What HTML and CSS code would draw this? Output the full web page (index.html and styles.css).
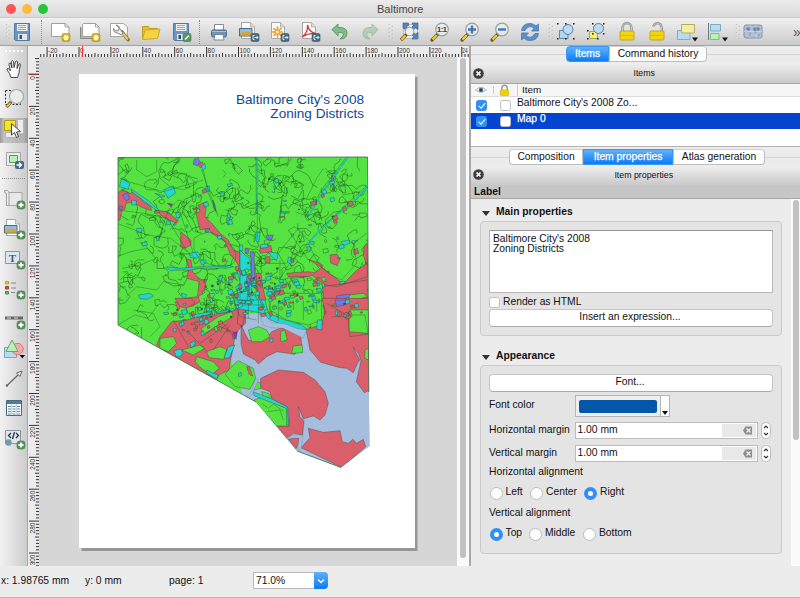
FILE: index.html
```html
<!DOCTYPE html>
<html lang="en">
<head>
<meta charset="utf-8">
<title>Baltimore</title>
<link rel="stylesheet" href="styles.css">
</head>
<body>
<svg class="defs" width="0" height="0" aria-hidden="true">
  <defs>
    <g id="grip" fill="#fafafa"><g fill="#b5b5b5"><circle cx="1.5" cy="1.5" r=".8"/><circle cx="4.5" cy="3.5" r=".8"/><circle cx="1.5" cy="5.5" r=".8"/><circle cx="4.5" cy="7.5" r=".8"/><circle cx="1.5" cy="9.5" r=".8"/><circle cx="4.5" cy="11.5" r=".8"/><circle cx="1.5" cy="13.5" r=".8"/><circle cx="4.5" cy="15.5" r=".8"/></g><circle cx="2" cy="2" r=".6"/><circle cx="5" cy="4" r=".6"/><circle cx="2" cy="6" r=".6"/><circle cx="5" cy="8" r=".6"/><circle cx="2" cy="10" r=".6"/><circle cx="5" cy="12" r=".6"/><circle cx="2" cy="14" r=".6"/><circle cx="5" cy="16" r=".6"/></g>
    <g id="floppy"><path d="M4.500 3.500h15v17h-14l-1-1z" fill="#6d95c2" stroke="#5578a0"/><path d="M7 4h10.500v7h-10.500z" fill="#eef0f0"/><path d="M8 5.500h8M8 7.500h8M8 9.500h8" stroke="#a2a7a9"/><path d="M8 14h9v6h-9z" fill="#e2e6e8"/><path d="M9.500 15h2.500v4h-2.500z" fill="#34506e"/></g>
    <g id="star"><rect x="14" y="13.500" width="8" height="8" rx="1.500" fill="#d2ad24" stroke="#b3911a" stroke-width=".6"/><path d="M18 14.500v6M15 17.500h6M16 15.500l4 4M20 15.500l-4 4" stroke="#fff6c6" stroke-width="1.200"/></g>
    <g id="lens"><path d="M9.500 14.500L4 20" stroke="#6a5a20" stroke-width="3.200" stroke-linecap="round"/><path d="M9 15L4.500 19.500" stroke="#f4cf30" stroke-width="2.200"/><path d="M10.500 13.500L9 15" stroke="#333" stroke-width="3"/><circle cx="14" cy="9.500" r="6.300" fill="#e9eded" fill-opacity=".8" stroke="#9a9f9f" stroke-width="1.200"/></g>
    <g id="export"><rect x="14" y="13.500" width="8" height="8" rx="1.500" fill="#4a6d87" stroke="#34536b" stroke-width=".6"/><path d="M17.500 15.500h-1.500v4h1.500M17.500 17.500h3.500M19.500 16l1.500 1.500-1.500 1.500" fill="none" stroke="#eef4f8" stroke-width=".9"/></g>
    <g id="paper"><path d="M4.500 2.500h9l4 4.500v11.500h-13z" fill="#fbfbfb" stroke="#a6a8a6"/><path d="M13.500 2.500v4.500h4" fill="#ddd" stroke="#a6a8a6" stroke-width=".8"/></g>
    <g id="picture"><path d="M2.500 8.500h12.500v7.500h-12.500z" fill="#8fc0df" stroke="#4b6b80"/><path d="M3 13.500q5-3.500 11.500-.5v2.500h-11.500z" fill="#d8a432"/></g>
    <g id="plus"><rect x="15" y="14" width="8" height="8" rx="2.500" fill="#58935c" stroke="#3f7a45" stroke-width=".6"/><path d="M19 15.500v5M16.500 18h5" stroke="#fff" stroke-width="1.800"/></g>
    <g id="corners" fill="#111"><path d="M3 3h1.500v1.500H3zM19 3h1.500v1.500H19zM3 18h1.500v1.500H3zM19 18h1.500v1.500H19zM11 3h1.500v1.500H11zM11 18h1.500v1.500H11z"/></g>
    <g id="lockbody"><rect x="5" y="11" width="14" height="9" rx="1" fill="#f2d60c" stroke="#b39c10" stroke-width=".8"/><path d="M5.500 15.500h13" stroke="#dfc000"/></g>
    <g id="close"><circle cx="5.500" cy="5.500" r="5.300" fill="#3d3d3d"/><path d="M3.500 3.500l4 4M7.500 3.500l-4 4" stroke="#fff" stroke-width="1.700"/></g>
    <g id="clear"><path d="M0 4.500L2.500 .5h6.500v8h-6.500z" fill="#8d8d8d"/><path d="M3.500 2.500l4 4M7.500 2.500l-4 4" stroke="#f5f5f5" stroke-width="1.200"/></g>
  </defs>
</svg>

<div class="window">
  <header class="titlebar"><div class="lights"><i class="red"></i><i class="amber"></i><i class="green"></i></div><h1>Baltimore</h1></header>

  <nav class="toolbar">
    <svg class="grip lead" width="7" height="18"><use href="#grip"/></svg>
    <span class="tool"><svg viewBox="0 0 24 24"><use href="#floppy"/></svg></span>
    <span class="sep"></span>
    <span class="tool"><svg viewBox="0 0 24 24"><path d="M3.500 3.500h13.500l4 3.500v9.500h-17.500z" fill="#fff" stroke="#9d9f9e"/><path d="M17 3.500v3.500h4" fill="none" stroke="#9d9f9e"/><use href="#star"/></svg></span>
    <span class="tool"><svg viewBox="0 0 24 24"><path d="M2.500 7v11.500h14" fill="#bbb" stroke="#888"/><path d="M5.500 3.500h12l3.500 3.500v9.500h-16.500v-12z" fill="#fff" stroke="#9d9f9e"/><path d="M17.500 3.500v3.500h3.500" fill="none" stroke="#9d9f9e"/><use href="#star"/></svg></span>
    <span class="tool"><svg viewBox="0 0 24 24"><path d="M2.500 3.500h13l4 3.500v9.500h-17z" fill="#fff" stroke="#a5a7a6"/><path d="M14 12L20 19.500" stroke="#7e6a22" stroke-width="3.600" stroke-linecap="round"/><path d="M14.500 13L20 19.500" stroke="#e9cf62" stroke-width="2"/><path d="M8 5l3 2.500-.5 3-3 .5-2-2.500q0 4.500 4 4.500l4 2 1.500-2-3-4q-.5-3.500-4-4z" fill="#eee" stroke="#777" stroke-width=".9"/></svg></span>
    <span class="tool"><svg viewBox="0 0 24 24"><path d="M3.500 19V6.500h6l1 2h8v2.500" fill="#e5bd31" stroke="#c29b20"/><path d="M3.500 19.500L6 10l15-1-2.500 9.500z" fill="#f4d33f" stroke="#d0a827"/></svg></span>
    <span class="tool"><svg viewBox="0 0 24 24"><use href="#floppy"/><rect x="14" y="13.500" width="8" height="8" rx="1.500" fill="#58935c" stroke="#3f7a45" stroke-width=".6"/><path d="M16 19.500l4-4" stroke="#e6f2e6" stroke-width="1.700"/></svg></span>
    <span class="sep"></span>
    <span class="tool"><svg viewBox="0 0 24 24"><path d="M7.500 4.500h9v6h-9z" fill="#fff" stroke="#889"/><rect x="4.500" y="10" width="15" height="7" rx="1.500" fill="#6f93b0" stroke="#4d6d8a"/><path d="M5 11.500h14" stroke="#a8c3d8"/><path d="M8 14.500h8l1 5.500h-10z" fill="#fbfbfb" stroke="#78899a"/></svg></span>
    <span class="tool"><svg viewBox="0 0 24 24"><use href="#paper"/><use href="#picture"/><use href="#export"/></svg></span>
    <span class="tool"><svg viewBox="0 0 24 24"><use href="#paper"/><path d="M10.500 6.500v11M5 12h11M6.500 8l8 8M14.500 8l-8 8" stroke="#eb9b24" stroke-width="1.700"/><circle cx="10.500" cy="12" r="2" fill="#fff1ca" stroke="#eb9b24"/><use href="#export"/></svg></span>
    <span class="tool"><svg viewBox="0 0 24 24"><use href="#paper"/><path d="M4 17q6-4 5.500-12q1.500 7 8 8.500q-7-.5-13.500 3.500" fill="none" stroke="#cf3e3e" stroke-width="1.300"/><use href="#export"/></svg></span>
    <span class="tool"><svg viewBox="0 0 24 24"><path d="M4 9.500L10 4v3.500q9-.5 9 5.500t-7 6q4-3 3.500-5t-5.500-1.500v3.500z" fill="#82bb87" stroke="#5a9e63" stroke-linejoin="round"/></svg></span>
    <span class="tool faded"><svg viewBox="0 0 24 24"><path d="M20 9.500L14 4v3.500q-9-.5-9 5.500t7 6q-4-3-3.500-5t5.500-1.500v3.500z" fill="#82bb87" stroke="#5a9e63" stroke-linejoin="round"/></svg></span>
    <svg class="grip g1" width="7" height="18"><use href="#grip"/></svg>
    <span class="tool"><svg viewBox="0 0 24 24"><path d="M6.500 4.500h14v14h-14z" fill="#e8eaea" stroke="#b9bdbd"/><path d="M6 3h5.500v2.500l-2 1 1.500 2-2 1.500-3-2zM21 3h-6l1.500 2.500-2 2 2 2 2-1.500 2.500 1.500zM21 19h-6l1.500-2.500-2-2 2-2 2 1.500 2.500-1.500z" fill="#5585b9" stroke="#3a6797" stroke-width=".7"/><circle cx="12.500" cy="11.500" r="4.200" fill="#eef0f0" stroke="#a6a6a6"/><path d="M9.500 14.500L4 20" stroke="#5c4c18" stroke-width="3.200"/><path d="M8.500 15.500L4.500 19.700" stroke="#f4cf30" stroke-width="2.200"/></svg></span>
    <span class="tool"><svg viewBox="0 0 24 24"><use href="#lens"/><text x="14" y="12.300" text-anchor="middle" font-size="7.500" font-weight="bold" fill="#333" textLength="10">1:1</text></svg></span>
    <span class="tool"><svg viewBox="0 0 24 24"><use href="#lens"/><path d="M14 5.500v8M10 9.500h8" stroke="#4379b3" stroke-width="2.400"/></svg></span>
    <span class="tool"><svg viewBox="0 0 24 24"><use href="#lens"/><path d="M10 9.500h8" stroke="#4379b3" stroke-width="2.400"/></svg></span>
    <span class="tool"><svg viewBox="0 0 24 24"><path d="M3.500 10.500q1-7 8.500-7 4 0 6 2.500l2.500-2v7h-7l2.500-2.500q-4-4-8 .5l-1 1.500zM20.500 13.500q-1 7-8.500 7-4 0-6-2.500l-2.500 2v-7h7l-2.500 2.500q4 4 8-.5l1-1.500z" fill="#5d90cb" stroke="#4577b2" stroke-width=".8"/></svg></span>
    <svg class="grip g2" width="7" height="18"><use href="#grip"/></svg>
    <span class="tool"><svg viewBox="0 0 24 24"><path d="M5.500 10.500h8.500v8h-8.500z" fill="#b4d5ec" stroke="#6089a7"/><circle cx="14" cy="9.500" r="5" fill="#b9dcf4" stroke="#53809f"/><use href="#corners"/></svg></span>
    <span class="tool"><svg viewBox="0 0 24 24"><path d="M5.500 11.500h8v7h-8z" fill="#f2ee7d" stroke="#afa852"/><circle cx="14.500" cy="8.500" r="5" fill="#b9dcf4" stroke="#53809f"/><path d="M8 3h1.500v1.500H8zM19 3h1.500v1.500H19zM3 10h1.500v1.500H3zM8 13h1.500v1.500H8zM19 13h1.500v1.500H19zM3 18h1.500v1.500H3zM13 18h1.500v1.500H13z" fill="#111"/></svg></span>
    <span class="tool"><svg viewBox="0 0 24 24"><path d="M7.500 12V8a4.500 5 0 0 1 9 0v4" fill="none" stroke="#8a8a8a" stroke-width="2.300"/><path d="M7.500 12V8a4.500 5 0 0 1 9 0v4" fill="none" stroke="#ddd" stroke-width=".8"/><use href="#lockbody"/></svg></span>
    <span class="tool"><svg viewBox="0 0 24 24"><path d="M8 6.500q3-5 7-2.500 2 1.500 2 8" fill="none" stroke="#8a8a8a" stroke-width="2.300"/><path d="M8 6.500q3-5 7-2.500 2 1.500 2 8" fill="none" stroke="#ddd" stroke-width=".8"/><use href="#lockbody"/></svg></span>
    <span class="tool"><svg viewBox="0 0 24 24"><path d="M2.500 10.500h12.500v9h-12.500z" fill="#b9dcf4" stroke="#84aac4"/><path d="M6.500 4.500h13v8.500h-13z" fill="#f3efa0" stroke="#b3ae62"/><path d="M17 17.500h6l-3 4z" fill="#111"/></svg></span>
    <span class="tool"><svg viewBox="0 0 24 24"><path d="M3.500 3v17" stroke="#777"/><path d="M5.500 4.500h10v6.500h-10z" fill="#b9dcf4" stroke="#7da8c6"/><path d="M5.500 13.500h8.500v6h-8.500z" fill="#b9f1bd" stroke="#80bd85"/><path d="M17 17.500h6l-3 4z" fill="#111"/></svg></span>
    <svg class="grip g2" width="7" height="18"><use href="#grip"/></svg>
    <span class="tool"><svg viewBox="0 0 24 24"><rect x="3" y="5" width="18" height="13" rx="2" fill="#b4c1d2" stroke="#7f94ad"/><path d="M5 8l4-1 1 2-2 2-2-1zM8 12l2 1-1 4zM12 8l3-1 4 1-1 3-2-1-1 4-2-3zM17 14l2 1-1 1z" fill="#6883a2" stroke="#8ba0b8" stroke-width=".5"/><path d="M3 11.500h18M9 5v13M15 5v13" stroke="#dce3ed" stroke-width=".5"/></svg></span>
    <span class="more">»</span>
  </nav>

  <div class="workspace">
    <nav class="sidebar">
      <span class="grip-h"></span>
      <span class="tool"><svg viewBox="0 0 24 24"><path d="M9 20.500q-1-4-3.500-7-1.500-2 .5-2 1.500.5 2.500 2.500L7 7.500q0-2 1.500-1.500L10 11 9.500 4.500q.5-2 2 0l.6 6L13.500 4.500q1.500-1.500 2 .5l-.5 6.500L17 7q1.500-1 1.500.5-1.500 6-1.500 8.500l-1.500 4.500z" fill="#fff" stroke="#333" stroke-width=".9" stroke-linejoin="round"/></svg></span>
      <span class="tool"><svg viewBox="0 0 24 24"><path d="M3.500 3.500h15v14h-15z" fill="none" stroke="#333" stroke-dasharray="2 1.500"/><path d="M9 15L4.500 20" stroke="#5c4c18" stroke-width="3.200"/><path d="M8.500 16L4.500 19.700" stroke="#e5bc3d" stroke-width="2"/><circle cx="14.500" cy="9.500" r="7" fill="#e8ecec" stroke="#a3a7a7" stroke-width="1.200"/></svg></span>
      <span class="tool active"><svg viewBox="0 0 24 24"><path d="M15.500 2.500h6v14h-6zM3.500 15.500h11v5h-11z" fill="#ececec" stroke="#b5b5b5"/><path d="M2.500 3.500h11v10h-11z" fill="#f7e32a" stroke="#b59b12"/><path d="M9.500 6.500v11.500l3-2.500 2 5 2-1-2-4.500 4-.5z" fill="#fff" stroke="#444"/></svg></span>
      <span class="tool low"><svg viewBox="0 0 24 24"><path d="M4.500 3.500h14v13h-14z" fill="#ececec" stroke="#a3a3a3"/><path d="M7.500 6.500h8v7h-8z" fill="#b4f2b7" stroke="#5c9b60"/><rect x="13" y="12" width="9" height="8" rx="2" fill="#426887"/><path d="M14.500 16h5M17 13.500l2.500 2.500-2.500 2.500" fill="none" stroke="#fff" stroke-width="1.400"/></svg></span>
      <span class="sep-h"></span>
      <span class="tool"><svg viewBox="0 0 24 24"><path d="M6.500 5.500h13.500v13h-13.500z" fill="#e8e8e8" stroke="#a8a8a8"/><path d="M2.500 3.500h3q1.500 1 1.500 3v12h-2.500v-12q-2 .5-2-3z" fill="#eee" stroke="#a0a0a0"/><use href="#plus"/></svg></span>
      <span class="tool"><svg viewBox="0 0 24 24"><use href="#paper"/><use href="#picture"/><use href="#plus"/></svg></span>
      <span class="tool"><svg viewBox="0 0 24 24"><path d="M3.500 4.500h14v12h-14z" fill="#d9e7f0" stroke="#8199aa"/><text class="serif-t" x="10.500" y="14.500" text-anchor="middle">T</text><use href="#plus"/></svg></span>
      <span class="tool"><svg viewBox="0 0 24 24"><path d="M9 6h5M9 11h5M9 15.500h4" stroke="#888"/><path d="M3.500 4.500h3v2.500h-3z" fill="#f6e520" stroke="#a79b24"/><path d="M3.500 9.500h3v2.500h-3z" fill="#d65252" stroke="#994040"/><path d="M3.500 14.500h3v2.500h-3z" fill="#70b879" stroke="#4e8555"/><use href="#plus"/></svg></span>
      <span class="tool"><svg viewBox="0 0 24 24"><path d="M3 9.500h18v3h-18z" fill="#666"/><path d="M5 11h4M12 11h4" stroke="#ddd"/><use href="#plus"/></svg></span>
      <span class="tool"><svg viewBox="0 0 24 24"><path d="M2.500 10.500h12v10h-12z" fill="#b9dcf4" stroke="#78a5c4"/><circle cx="15.500" cy="12" r="5.700" fill="#f5aaaa" stroke="#d87575"/><path d="M10 3L16 14.500H4z" fill="#bbefb7" stroke="#67a566"/><path d="M17.500 18h5.500l-2.700 3.500z" fill="#111"/></svg></span>
      <span class="tool"><svg viewBox="0 0 24 24"><path d="M4.500 19L16 8" stroke="#666" stroke-width="1.200"/><path d="M20 4l-5.500 2 3.500 3.500z" fill="#eee" stroke="#666"/><circle cx="5" cy="18.500" r="1.200" fill="#666"/></svg></span>
      <span class="tool"><svg viewBox="0 0 24 24"><path d="M4.500 3.500h15v15h-15z" fill="#f8fafb" stroke="#456b86"/><path d="M5 4h14v3h-14z" fill="#527b99"/><path d="M6 9.500h3M6 12h3M6 14.500h3M6 17h3M10.500 9.500h3M10.500 12h3M10.500 14.500h3M10.500 17h3M15 9.500h3M15 12h3M15 14.500h3M15 17h3" stroke="#668aa4" stroke-width="1.200"/><path d="M9.700 7v11M14.300 7v11" stroke="#9bb1c0" stroke-width=".6"/></svg></span>
      <span class="tool"><svg viewBox="0 0 24 24"><path d="M3.500 3.500h15v13h-15z" fill="#dce8f0" stroke="#8799a5"/><path d="M9 6l-2.500 2.500L9 11M14 6l2.500 2.500L14 11M12.500 5l-2 7" fill="none" stroke="#333" stroke-width="1.300"/><circle cx="6.500" cy="15.500" r="3.200" fill="#7497ca"/><path d="M4 14l3-1 1 2-3 2z" fill="#69ad5a"/><use href="#plus"/></svg></span>
    </nav>

    <main class="view">
      <svg class="ruler-x" id="rulerX" width="441" height="11"></svg>
      <div class="view-body">
        <svg class="ruler-y" id="rulerY" width="11" height="509"></svg>
        <div class="canvas">
          <article class="page">
            <h2>Baltimore City's 2008<br>Zoning Districts</h2>
            <svg class="map" width="256" height="314" viewBox="117 156 256 314">
              <clipPath id="city"><path d="M118 157.500L367.500 157L368.800 392 369.500 446 341 467.500 297 451 256 402 118 325z"/></clipPath>
              <g clip-path="url(#city)">
                <path d="M117 156h254v312h-254z" fill="#55e342"/>
                <g id="parcels" class="lines"></g>
                <g class="shape" transform="translate(110 150) scale(.33333)">
                  <path class="r" d="M22 130l13-10 25 10 12-5 20 20 8 10 22 15 3 12-30-10-25-15-22 3-3 18-10 5-5 27-10 4zM135 180l35 5 35 27-5 8-35-15zM258 190l12-5-5-20 25-10-5 45 25 25 20 25 25 20 15 30 30 10 2 50-17-15-25-35-15-35-40-25-10-15-25 5zM212 245l31 25v15l-18 10-13-5zM232 328l11 2 5 35 22 25 20-2-10 42-15 10 5 15-25 15-30-10 10-15 37-5 6-45-38-10 5-25zM195 455l20 5-10 22z"/>
                  <path class="c" d="M35 85l25 15-5 18-27-8zM62 116l53 36 32 28-6 2-45-34-30-22zM160 120l30-12 6 22-22 15zM135 130l30 8-10 4zM65 150l15 3-2 12-13 0zM198 188h12v15h-12zM170 212h12v12h-12zM80 235h16v12h-16zM140 260h8v12h-8zM238 310l25-5 8 12-10 8-20-2zM270 330h18v10l-14 4zM85 435l35-5 10 8-18 10-22-2zM350 212l15-3 3 13-14 3zM388 285h10v18h-10zM288 108h10v16h-10zM325 380l12-4 2 12-10 4zM170 350l35 5 70-5 80-4 15 4-15 4-90 1-25 5-40 0-18 2-8-6zM380 360l20 10 30 60-10 52h-45l10-50-8-20 14-15zM215 430l15 4-5 10-10-4z"/>
                  <path class="p" d="M252 28l12-5 8 15-10 10-12-5zM38 135l15-8 5 20-10 6zM28 168l10 2-3 10-7-3zM285 238l15-3-5 11-9 1zM362 370l12 8 8 14-12-10zM308 150l6 12 3 20-6-8z"/>
                  <path fill="#c11bd8" d="M172 160l15 2-3 9z"/>
                  <path class="r" d="M265 42l12-6 5 12-12 5z"/><path class="c" d="M275 48l10-8 2 15-10 5z"/>
                  <path class="n" d="M280 60l15 70 25 60M275 60l50 140M30 85q20 10 130 40l50-15 70-20M22 220l90 35 70 10 75 60M22 180l80 10 70 15 60 100M252 265q40-30 70-10l50 40q20 50-30 55-70 0-90-50zM145 270l30-90 30-30 30 10M180 240l40-55 30 60M210 185l40 125M22 320l40-15 50-10 25 30-45 20-55 10M80 30v30l30 20 30-15v-35M150 85l40-20 40 10 30 25-40 20-40-10zM338 60l10 10-8 12M30 390l20-20 25 35M50 440l30-30 60 10 20-25 60 10"/>
                </g>
                <g class="shape" transform="translate(240 150) scale(.33333)">
                  <path class="r" d="M205 328l45 28 60 45 40-40 32-22v112l-20 30h-110l-5-80-30-25-12 4-60 0-5-10 65-5 20 3 25-20-10-8zM270 315l20-3 10 15-8 20-20-8zM60 290l15-8 18 5 3 25-18-5-18 3zM48 370l15 0 5 40 10 40-15 10-12-30zM0 305l10 20-2 35-8-5zM340 300l12-5 5 15-14 4zM372 290l10-8v65l-12-30zM75 320h15v20l-15-4zM280 212l10-2 2 8-10 2zM150 325h12v12h-12z"/>
                  <path class="cl" d="M51 22l2 60-2 60 1 48M324 22l-70 95-50 83M382 110l-40 44-48 38-52 46-40 44"/>
                  <path class="n" d="M202 282l-55 60-27 45M48 22l1 170M318 22l-70 94-48 78M378 108l-84 80-52 46"/>
                  <path class="c" d="M102 90l10-5 5 8-9 7zM48 245l12 3-3 28-10-4zM302 275l25-5 3 10-20 7zM335 273l18-2-12 12zM245 125l10-8 6 10-9 8zM85 305l30 5-5 22-15-12zM0 300l15 15 15 10 5 50 0 50 35 45v10H0zM105 410l12-5 4 70-14-10zM145 322l8 0 1 20-12-5zM200 290l14 2-2 10-11-2zM300 395l14-2 0 8-16 1zM120 185h18v4h-18zM60 285l20-5 5 12-22 3zM120 400l12-3v15h-12zM170 405l15 2-5 8-12-1zM230 398l8 0v10h-8z"/>
                  <path class="p" d="M78 257l22-2-5 14-12 2zM30 305l12 0 4 110-14-10 2-70zM15 295h10v15h-10zM22 375l10 5-5 35-12-2zM290 438l35-6 10 5-22 30-25 3zM275 75l8 15-8 10zM222 160l8-10 0 15z"/>
                  <path class="g" d="M330 435l40-5 12 10-35 10-20 30h-15zM245 382l10 0 4 12-12-2z"/>
                  <path class="n" d="M52 150L52 270M150 335l30-90-5-10-60 75 25 45M205 330l-60-90 20-10 60 60M205 200l-40-15M175 150l25-5 30-60 20-30M210 290q30 80 95 100l45-50-10-60 40-30M50 340h90M120 330v60l80-10M230 400l60 10 92-30M250 410l132-20M135 110l-10 50-10 60M125 140l-5 80M155 22l-15 30M255 55l35 30 20 50 50-10"/>
                </g>
                <g class="shape" transform="translate(110 300) scale(.33333)">
                  <path class="w" d="M380 100L395 40h60l135 45 190 20V520H560L400 290 360 175z"/>
                  <path class="r" d="M140 135l10-25 35-45 45-5 60-15 80-10 25-25 12 25v35l-22 20-10 15-5 35-10 50-3 20-30 15-8 15 45 50 52 5-6 20zM393 75l22 45 25 5 30-10 15-20 25-10 35 0 27 20 3 30-20 28-55-8-30 15-25 22-10-12-35-18-7-32zM588 88l12 62 32 37 58 16 20 2 20 13 10-23 9-15-19-38 15 18 8 22-14 63 24 33 16-8V-5H635l10 35-10 45zM452 235l53-25 75 7 35 23 30 35 10 35-10 35-15 15-20-12-30 8-15-36 5 30 12 12-4 43-28-5-20 15-30-37 38 0-3-53-50-30-5-20-28-10zM595 385l45 12 50-5 7 33 18 5 13-12 12 12 20-12 7 22-72 62-122-59 27-30zM535 418l33-6-3 18-7 17zM195-5h50l10 15-25 15-20-5zM395 0l12 35-10 45-15-10 5-60z"/>
                  <path class="g" d="M375 190l10-8 45 23 7 30-17 33-45-8-30-38zM432 300l23-8 75 33 8 53-38 0-65-75zM435 245l15 3 3 17-20 5zM550 138l27-3 1 23-33 2zM455 275l20 5 10 12-25 0zM415 90l30-10 25 10 10 20-25 15-30 0zM512 95l12-5 8 30-20 5zM260 170l50 15 18 20-25 20-35-25-12-15zM275 85l50-35 40-15 5 15-55 30-35 25zM290 155l40-15 20 8-8 30-45-5zM150 115l40-5 10 20-25 25-25-10zM718 30h58v70l-60-5zM765 150l11-5v35l-12-5zM215 150l55-15 15 10-35 20zM480-20h155v80l-40 15-65-15-50-30z"/>
                  <path class="c" d="M375 0h90l10 40 50 20 50 15 15 12-20 2-55-15-35-15-25-20-80-15zM192 152l20-5 8 12-12 12-10-2zM355 140l20-5-18 40-15-2zM622 60h14v28h-16zM290 210l20 10 15 5-5 12-30-18zM430 275l50 20 52 25 3 55-5 0-1-50-97-38zM310 40l60-15 5 6-65 12zM250 45l50-10 0 8-48 10zM190 85l8 0v10h-8zM385 220l8-3 2 9-9 4zM480 115l10 2-3 10-8-2zM240 130l15-8v12l-12 10zM610 0h20v8h-20z"/>
                  <path class="p" d="M675 0h35l-5 15-25 5zM368 100h8v15h-8z"/><path fill="#b91dce" d="M370 98l12-3-4 22z"/>
                  <path class="w water" d="M448 42l20 6 15 20 40 3 40 15 27 4-10 25-60-30-38-2-22-8z"/>
                  <path class="r" d="M410 200l8 0 10 28-10-4z"/>
                  <path class="w water" d="M437 235l8 5-20 45-8 8-7-4 15-15zM530 415q15-12 42-10l6 4-5 42-9-2 3-35z"/>
                  <path class="n" d="M190 60l45 80M230 90l60 65M285 100l45-20 50 20M310 150l50-75M330 60l50 60M270 130l85-60M650 10l60 35 55 0 10 60M665 50h50l5 60 56-8M480 10v45M505 5v60M550 0v30M580 0v60M620 0v35M375 10l15 40 50 10M400 15h60M415 0v55M445 0v70M24 75l50-30 40 10 30-40M70 30l60 10 20 40-30 30M455 310l20 15 15-12 30 20M470 335l40-5 10 30"/>
                </g>
                <g id="specks"></g>
              </g>
              <path d="M118 157.500L367.500 157L368.800 392M341 467.500L297 451M256 402L118 325V157.500" fill="none" stroke="#336b48" stroke-width=".8"/>
            </svg>
          </article>
        </div>
        <div class="vscroll"><i></i></div>
      </div>
    </main>

    <aside class="dock">
      <div class="tabs first"><span class="tab on t1">Items</span><span class="tab t2">Command history</span></div>
      <div class="dock-title items"><svg width="11" height="11"><use href="#close"/></svg><b>Items</b></div>
      <section class="tree">
        <div class="tree-head">
          <span class="cell eye"><svg width="12" height="8" viewBox="0 0 12 8"><path d="M.5 4Q5.500-1.500 11.500 4 6 8.500.5 4z" fill="#e7ecef" stroke="#a4adb3" stroke-width=".8"/><circle cx="6" cy="4" r="2.300" fill="#4c7898"/><circle cx="6" cy="4" r="1" fill="#142b3a"/></svg></span>
          <span class="cell lock"><svg width="11" height="12" viewBox="4 1 16 20"><path d="M7.500 12V8a4.500 5 0 0 1 9 0v4" fill="none" stroke="#999" stroke-width="2.300"/><use href="#lockbody"/></svg></span>
          <span class="cell">Item</span>
        </div>
        <div class="tree-row"><i class="check on"></i><i class="check"></i><span>Baltimore City's 2008 Zo...</span></div>
        <div class="tree-row selected"><i class="check on"></i><i class="check"></i><span>Map 0</span></div>
      </section>
      <div class="tabs second"><span class="tab t3">Composition</span><span class="tab on t4">Item properties</span><span class="tab t5">Atlas generation</span></div>
      <div class="dock-title props"><svg width="11" height="11"><use href="#close"/></svg><b>Item properties</b></div>
      <div class="kind">Label</div>
      <div class="scroll-area">
        <div class="form">
          <h3><i></i>Main properties</h3>
          <section class="group main-group">
            <div class="textarea">Baltimore City's 2008<br>Zoning Districts</div>
            <label class="html"><i class="check"></i>Render as HTML</label>
            <div class="button">Insert an expression...</div>
          </section>
          <h3 class="h-app"><i></i>Appearance</h3>
          <section class="group app-group">
            <div class="button">Font...</div>
            <div class="row color-row"><span>Font color</span><div class="swatch"><i></i><em></em></div></div>
            <div class="row"><span>Horizontal margin</span><div class="field"><b>1.00 mm</b><em><svg width="9" height="9"><use href="#clear"/></svg></em></div><svg class="spin" width="10" height="17"><rect x=".5" y=".5" width="9" height="16" rx="4" fill="#fff" stroke="#bbb"/><path d="M3 6l2-2 2 2M3 11l2 2 2-2" fill="none" stroke="#333" stroke-width="1.200"/></svg></div>
            <div class="row"><span>Vertical margin</span><div class="field"><b>1.00 mm</b><em><svg width="9" height="9"><use href="#clear"/></svg></em></div><svg class="spin" width="10" height="17"><rect x=".5" y=".5" width="9" height="16" rx="4" fill="#fff" stroke="#bbb"/><path d="M3 6l2-2 2 2M3 11l2 2 2-2" fill="none" stroke="#333" stroke-width="1.200"/></svg></div>
            <div class="align-label">Horizontal alignment</div>
            <div class="radios"><i></i><span class="w1">Left</span><i></i><span class="w2">Center</span><i class="on"></i><span>Right</span></div>
            <div class="align-label v">Vertical alignment</div>
            <div class="radios"><i class="on"></i><span class="w3">Top</span><i></i><span class="w4">Middle</span><i></i><span>Bottom</span></div>
          </section>
        </div>
        <div class="form-scroll"><i></i></div>
      </div>
    </aside>
  </div>

  <footer class="status"><span class="sx">x: 1.98765 mm</span><span class="sy">y: 0 mm</span><span class="sp">page: 1</span><div class="zoom"><span>71.0%</span><i><svg width="8" height="6"><path d="M1 1.500l3 3 3-3" fill="none" stroke="#fff" stroke-width="1.300"/></svg></i></div></footer>
</div>
<script src="app.js"></script>
</body>
</html>
```
FILE: styles.css
```css
* { box-sizing: border-box; }
body { margin: 0; background: #ececec; font: 10.3px/12px "Liberation Sans", Arial, sans-serif; color: #111; overflow: hidden; }
h1, h2, h3 { margin: 0; font-weight: normal; font-size: inherit; }
svg { display: block; flex: none; }
i, em, b { font-style: normal; font-weight: normal; }
.defs { position: absolute; }
.window { width: 800px; height: 598px; display: flex; flex-direction: column; border-radius: 4px 4px 0 0; overflow: hidden; }

.titlebar { height: 18px; flex: none; display: flex; align-items: center; background: linear-gradient(#ebebeb, #dadada); border-bottom: 1px solid #c9c9c9; }
.lights { display: flex; gap: 6px; padding-left: 5.500px; width: 377px; }
.lights i { width: 10px; height: 10px; border-radius: 50%; }
.red { background: #fc5753; }
.amber { background: #fdbc40; }
.green { background: #26c63b; }
.titlebar h1 { font-size: 11px; color: #444; }

.toolbar { height: 28px; flex: none; display: flex; align-items: center; padding-top: 1px; background: linear-gradient(#f0f0f0, #cbcbcb); border-bottom: 1px solid #a3a3a3; }
.tool { width: 30.250px; flex: none; display: flex; justify-content: center; }
.tool svg { width: 24px; height: 24px; overflow: visible; }
.faded { opacity: .45; }
.sep { width: 7.600px; height: 24px; flex: none; display: flex; justify-content: center; }
.sep::before { content: ""; border-left: 1px dotted #8a8a8a; }
.lead { margin: 0 -5px 0 5px; }
.g1 { margin: 0 -1px 0 3px; }
.g2 { margin: 0 -4.500px 0 3px; }
.more { margin-left: auto; width: 7px; font-size: 14px; color: #555; }

.workspace { height: 520px; flex: none; display: flex; }
.sidebar { width: 28px; flex: none; display: flex; flex-direction: column; background: linear-gradient(90deg, #f2f2f2, #cccccc); border-right: 1px solid #aaa; }
.sidebar .tool { width: 28px; height: 30px; flex: none; align-items: center; }
.sidebar .low { padding-top: 4px; }
.sidebar .active { background: linear-gradient(90deg, #9a9a9a, #c4c4c4 15%, #b0b0b0 85%, #939393) 0 4px / 100% 25px no-repeat; }
.grip-h { height: 8px; flex: none; margin: 0 4px; background: radial-gradient(circle, #fff 0 .8px, #bbb 1px, transparent 1.300px) 0 3px / 4px 4px repeat-x; }
.sep-h { height: 10px; flex: none; padding-top: 4px; }
.sep-h::before { content: ""; display: block; margin: 0 2px; border-top: 1px dotted #8a8a8a; }

.view { width: 441px; flex: none; display: flex; flex-direction: column; }
.view-body { display: flex; height: 509px; }
.ruler-x, .ruler-y { background: #ebebeb; }
.canvas { width: 418px; height: 509px; background: #d6d6d6; padding: 17px 0 0 40px; }
.page { width: 336px; height: 474px; background: #fff; box-shadow: 2.500px 3px 0 #969696; padding: 19px 51px 0 38px; }
.page h2 { font-size: 13.600px; line-height: 13.600px; color: #0e4a90; text-align: right; height: 63px; }
.map { margin-right: -20px; font-size: 0; }
.vscroll { width: 12px; background: #fafafa; padding: 1px 0 3px 3px; }
.vscroll i { display: block; width: 6px; height: 500px; border-radius: 3px; background: #c1c1c1; }
.lines { fill: none; stroke: #1d5f20; stroke-width: .5; }
.shape { stroke: #333d35; stroke-opacity: .75; stroke-width: 1.500; }
.r { fill: #d95f6b; }
.c { fill: #22d7cf; }
.p { fill: #7776e6; }
.g { fill: #55e342; }
.w { fill: #a5bedd; stroke: none; }
.n { fill: none; stroke: #23512a; }
.cl { fill: none; stroke: #1fb9b8; stroke-width: 5; stroke-opacity: 1; stroke-dasharray: 34 3 12 2; }
.water { stroke: #566f8b; stroke-width: 1; }
.tick-label { font-size: 6.500px; fill: #333; }
.serif-t { font: bold 11px "Liberation Serif", serif; fill: #4f5a62; }

.dock { width: 331px; flex: none; display: flex; flex-direction: column; border-left: 2px solid #a9a9a9; background: #ececec; }
.tabs { display: flex; flex: none; background: linear-gradient(#d4d4d4, #d4d4d4) 0 50% / 100% 1px no-repeat; }
.first { height: 17px; padding-left: 95px; }
.second { height: 18px; padding: 1px 0 0 38px; margin-top: 1px; }
.tab { height: 16px; background: #fff; text-align: center; border: 1px solid #bebebe; border-top-color: #d0d0d0; line-height: 13px; }
.tab:first-child { border-radius: 4px 0 0 4px; }
.tab:last-child { border-radius: 0 4px 4px 0; }
.tab.on { background: linear-gradient(#62b0f9, #0b7bf8); border-color: #3b96f5; color: #fff; -webkit-text-stroke: .25px #fff; }
.t1 { width: 43px; }
.t2 { width: 98px; }
.t3 { width: 74px; }
.t4 { width: 90px; }
.t5 { width: 92px; }
.dock-title { flex: none; display: flex; align-items: center; padding-left: 1.500px; background: linear-gradient(#efefef, #c9c9c9); font-size: 8.800px; }
.dock-title b { flex: 1; text-align: center; padding-left: 5px; }
.items { height: 21px; border-bottom: 1px solid #a5a5a5; }
.props { height: 19px; padding-bottom: 2px; }
.props b { padding-left: 4px; }
.tree { height: 63px; flex: none; background: #fff; border-bottom: 1px solid #b4b4b4; }
.tree-head { height: 13px; display: flex; align-items: center; background: #f6f6f6; border-bottom: 1px solid #ddd; font-size: 9.900px; }
.cell { padding-left: 4px; }
.eye { width: 23px; border-right: 1px solid #ccc; }
.lock { width: 24px; padding-left: 5px; border-right: 1px solid #ccc; }
.tree-row { height: 16px; display: flex; align-items: center; padding-left: 5px; }
.tree-row span { line-height: 9px; padding-bottom: 5px; }
.selected { background: #0445cf; color: #fff; }
.selected span { -webkit-text-stroke: .25px #fff; }
.check { width: 11px; height: 11px; flex: none; border: 1px solid #bfbfbf; border-radius: 2.500px; background: #fff; display: flex; align-items: center; justify-content: center; }
.tree-row .check { margin-top: 1px; margin-right: 13px; }
.tree-row .check + .check { margin-right: 6px; }
.check.on { background: #2f8ff7; border-color: #2f8ff7; }
.check.on::after { content: ""; width: 3px; height: 6px; border: solid #fff; border-width: 0 1.300px 1.300px 0; transform: rotate(40deg) translate(-.5px, -.5px); }
.kind { height: 14px; flex: none; background: #c6c6c6; border-bottom: 1px solid #a5a5a5; padding-left: 3px; font-weight: bold; line-height: 13px; }
.scroll-area { flex: 1; display: flex; }
.form { width: 320px; padding: 7px 0 0 9px; }
.form h3 { font-weight: bold; height: 15px; display: flex; align-items: center; padding: 0 0 3px 2px; line-height: 12px; }
.form h3 i { border: 4.500px solid transparent; border-top: 5.500px solid #333; border-bottom: 0; margin-right: 6px; margin-top: 2px; }
.form h3.h-app { margin-top: 14px; }
.group { width: 302px; background: #e4e4e4; border: 1px solid #c9c9c9; border-radius: 4px; padding: 8px 8px 0; }
.main-group { height: 115px; }
.app-group { height: 189px; }
.textarea { height: 63px; background: #fff; border: 1px solid #b9b9b9; border-top-color: #999; padding: 3px 3px; line-height: 10.400px; }
.html { display: flex; align-items: center; height: 17px; gap: 3px; }
.html .check { margin-top: 2px; }
.main-group .button { margin-top: -1px; }
.button { height: 18px; background: #fff; border: 1px solid #c6c6c6; border-bottom-color: #aaa; border-radius: 4px; text-align: center; line-height: 14px; padding-right: 2px; }
.row { display: flex; align-items: center; height: 17px; margin-bottom: 6px; }
.row span { width: 86px; flex: none; padding-bottom: 2px; }
.color-row { height: 22px; margin: 3px 0 5px; }
.swatch { width: 95px; height: 22px; border: 1px solid #b5b5b5; background: #eee; display: flex; padding-left: 2.500px; }
.swatch i { width: 78px; height: 13px; border-radius: 2px; background: #0257ab; margin-top: 4px; }
.swatch em { flex: 1; margin-left: 3px; border-left: 1px solid #b5b5b5; background: #fff; display: flex; align-items: flex-end; padding: 0 0 1.500px 1.500px; }
.swatch em::after { content: ""; border: 3px solid transparent; border-top: 4px solid #111; border-bottom: 0; }
.field { width: 183px; height: 17px; background: #fff; border: 1px solid #bcbcbc; display: flex; align-items: center; padding: 1px; }
.field b { flex: 1; padding: 0 0 2px .5px; }
.field em { width: 34px; height: 13px; background: #e8e8e8; display: flex; align-items: center; justify-content: flex-end; padding-right: 4px; }
.spin { margin-left: 2.500px; }
.align-label { height: 13px; margin-top: -2px; line-height: 12px; }
.align-label.v { margin-top: 6px; }
.radios { height: 21.500px; display: flex; align-items: center; padding-top: 6px; }
.radios i { width: 13px; height: 13px; border-radius: 50%; background: #fff; border: 1px solid #bcbcbc; margin: 2px 3px 0 .5px; display: flex; }
.radios span { padding-bottom: 1px; }
.radios i.on { border: 4.500px solid #2f8ff7; }
.w1 { width: 24px; }
.w2 { width: 37.500px; }
.w3 { width: 23px; }
.w4 { width: 37.500px; }
.form-scroll { width: 9px; background: #fafafa; padding: 1px 0 0 2px; }
.form-scroll i { display: block; width: 6px; height: 240px; background: #c1c1c1; border-radius: 3px; }

.status { height: 32px; flex: none; display: flex; align-items: center; border-bottom: 1px solid #b8b8b8; padding: 0 0 2px 1px; }
.sx, .sy, .sp { width: 84px; }
.zoom { width: 75px; height: 17px; display: flex; background: #fff; border: 1px solid #b8b8b8; border-radius: 0 4px 4px 0; }
.zoom span { flex: 1; padding-left: 2px; line-height: 16px; }
.zoom i { width: 14px; height: 17px; margin: -1px; background: linear-gradient(#62b0f9, #0b7bf8); border-radius: 0 4px 4px 0; display: flex; align-items: center; justify-content: center; }
```
FILE: app.js
```js
const NS = 'http://www.w3.org/2000/svg';
function add(parent, name, attrs, text) {
  const el = document.createElementNS(NS, name);
  for (const k in attrs) el.setAttribute(k, attrs[k]);
  if (text !== undefined) el.textContent = text;
  parent.appendChild(el);
  return el;
}

// Rulers: one tick every 2 mm, a label every 20 mm.
const PITCH = 31.9;
const rx = document.getElementById('rulerX');
const ry = document.getElementById('rulerY');
for (let mm = -26; mm <= 244; mm += 2) {
  const x = 51 + mm / 20 * PITCH;
  const major = mm % 20 === 0;
  if (x > 11) add(rx, 'path', { d: `M${x} ${major ? 1 : mm % 10 ? 8 : 7}V11`, stroke: '#333', 'stroke-width': 1 });
  // The last label has room for two digits only.
  if (major && mm < 240) add(rx, 'text', { x: x + 1, y: 6.5, class: 'tick-label' }, mm);
  if (mm === 240) add(rx, 'text', { x: x + .5, y: 6.5, class: 'tick-label', textLength: 5.2, lengthAdjust: 'spacingAndGlyphs' }, '24');
}
add(rx, 'path', { d: 'M54.500 0V11', stroke: '#f33' });
for (let mm = -10; mm <= 308; mm += 2) {
  const y = 17.5 + mm / 20 * PITCH;
  const major = mm % 20 === 0;
  add(ry, 'path', { d: `M${major ? 1 : mm % 10 ? 8 : 7} ${y}H11`, stroke: '#333', 'stroke-width': 1 });
  if (major) add(ry, 'text', { transform: `translate(6.500 ${y + 1.5}) rotate(-90)`, 'text-anchor': 'end', class: 'tick-label' }, mm);
}
add(ry, 'path', { d: 'M0 17H11', stroke: '#f33' });

// Minor zoning parcels, laid out from a fixed seed.
let seed = 2008;
const rnd = () => (seed = (seed * 16807) % 2147483647) / 2147483647;
const parcels = document.getElementById('parcels');
for (let n = 0; n < 150; n++) {
  let x = 118 + rnd() * 250, y = 158 + rnd() * 170;
  let dir = rnd() < .5 ? .5 : 0;
  dir += Math.floor(rnd() * 4) * Math.PI / 2;
  const bend = rnd() < .5 ? .75 : .25;
  let d = `M${x.toFixed(1)} ${y.toFixed(1)}`;
  const steps = 7 + rnd() * 9;
  for (let i = 0; i < steps; i++) {
    const len = 1.5 + rnd() * rnd() * 11;
    x += Math.cos(dir) * len;
    y += Math.sin(dir) * len;
    d += `L${x.toFixed(1)} ${y.toFixed(1)}`;
    dir += (rnd() < bend ? 1 : -1) * (rnd() < .4 ? Math.PI / 2 : .65);
  }
  add(parcels, 'path', { d });
}

// Small lots cluster round the centre and along the southern rail lines.
const specks = document.getElementById('specks');
const clusters = [[245, 287, 45, 30, 120], [200, 320, 40, 22, 50], [290, 298, 35, 28, 60], [345, 310, 22, 18, 22], [225, 215, 95, 50, 30], [330, 220, 35, 50, 20]];
const tones = ['#22d7cf', '#22d7cf', '#22d7cf', '#d95f6b', '#d95f6b', '#55e342', '#264e2c'];
for (const [cx, cy, w, h, count] of clusters) {
  for (let i = 0; i < count; i++) {
    const x = cx + (rnd() + rnd() - 1) * w, y = cy + (rnd() + rnd() - 1) * h;
    if (y > 316 && x > 235) continue;
    const tone = Math.floor(rnd() * tones.length);
    const big = tone === tones.length - 1 ? .4 : 1.4;
    const a = .7 + rnd() * 3.2 * big, b = .7 + rnd() * 2.4 * big;
    add(specks, 'path', {
      d: `M${x.toFixed(1)} ${y.toFixed(1)}l${a.toFixed(1)} ${(-b * .3).toFixed(1)}l${(b * .3).toFixed(1)} ${b.toFixed(1)}l${(-a).toFixed(1)} ${(b * .4).toFixed(1)}z`,
      fill: tones[tone], stroke: '#28492e', 'stroke-width': .4
    });
  }
}
```
